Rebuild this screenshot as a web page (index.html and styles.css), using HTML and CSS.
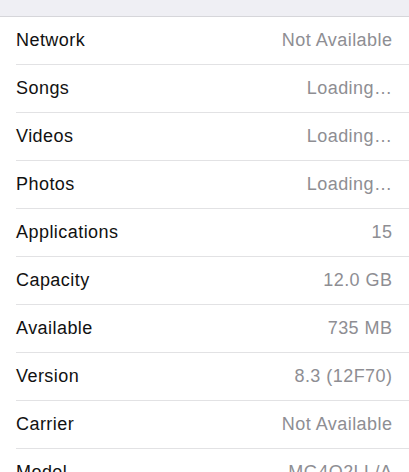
FILE: index.html
```html
<!DOCTYPE html>
<html>
<head>
<meta charset="utf-8">
<link rel="stylesheet" href="styles.css">
</head>
<body>
<div class="top"></div>
<ul class="list">
  <li class="row"><span class="label">Network</span><span class="value">Not Available</span></li>
  <li class="row"><span class="label">Songs</span><span class="value">Loading…</span></li>
  <li class="row"><span class="label">Videos</span><span class="value">Loading…</span></li>
  <li class="row"><span class="label">Photos</span><span class="value">Loading…</span></li>
  <li class="row"><span class="label">Applications</span><span class="value">15</span></li>
  <li class="row"><span class="label">Capacity</span><span class="value">12.0 GB</span></li>
  <li class="row"><span class="label">Available</span><span class="value">735 MB</span></li>
  <li class="row"><span class="label">Version</span><span class="value">8.3 (12F70)</span></li>
  <li class="row"><span class="label">Carrier</span><span class="value">Not Available</span></li>
  <li class="row"><span class="label">Model</span><span class="value">MG4Q2LL/A</span></li>
</ul>
</body>
</html>
```
FILE: styles.css
```css
html, body {
  margin: 0;
  padding: 0;
  background: #ffffff;
  overflow: hidden;
}
body {
  font-family: "Liberation Sans", Arial, sans-serif;
  -webkit-font-smoothing: antialiased;
}
.top {
  height: 16px;
  background: #efeff4;
  border-bottom: 1px solid #d6d6da;
}
.list {
  list-style: none;
  margin: 0;
  padding: 0 0 0 16px;
}
.row {
  height: 47px;
  border-bottom: 1px solid #e2e2e4;
  display: flex;
  align-items: center;
  justify-content: space-between;
  padding-right: 17px;
  font-size: 18px;
  letter-spacing: 0.45px;
}
.label {
  color: #111111;
}
.value {
  color: #8e8e93;
  margin-right: -0.45px;
}
```
